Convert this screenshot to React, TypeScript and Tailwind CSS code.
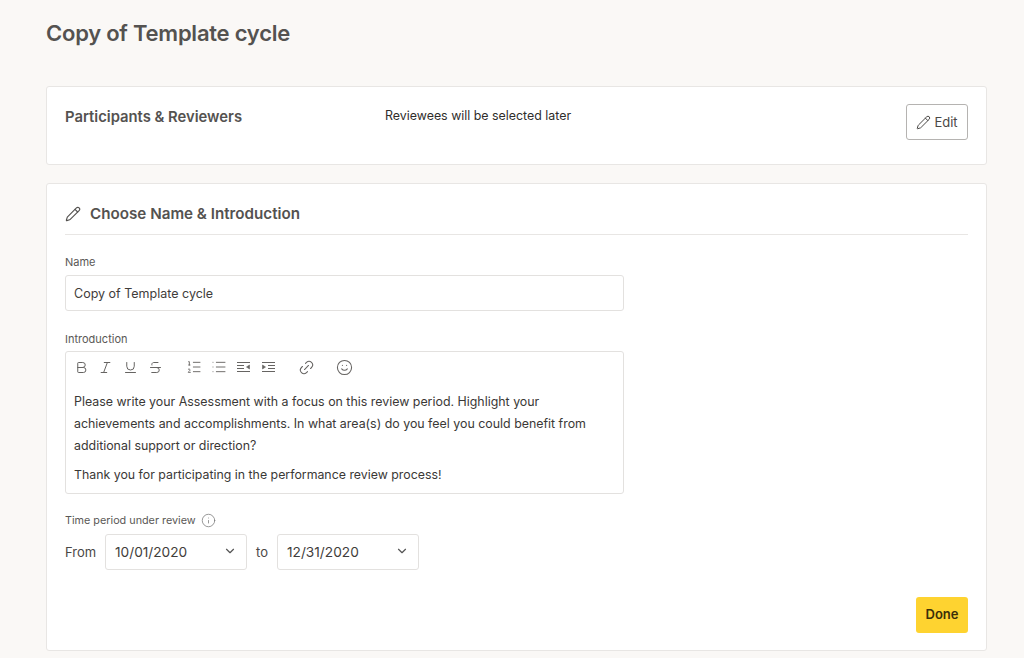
import { Bold, Italic, Underline, Strikethrough, ListOrdered, List, Link2, Smile, Pencil, ChevronDown, Info } from 'lucide-react';

const font = "font-['Inter','Liberation_Sans',sans-serif]";

function DateSelect({ value }: { value: string }) {
  return (
    <div className="flex h-[36px] w-[142px] items-center justify-between rounded-[3px] border border-[#e3e1df] bg-white pl-[9px] pr-[9px] text-[13.7px] text-[#3f3d3b]">
      <span>{value}</span>
      <ChevronDown className="-mt-[2px] h-[14px] w-[14px] text-[#555]" strokeWidth={2} />
    </div>
  );
}

// toolbar indent icon, four lines with a small arrow
function IndentIcon({ flip, className }: { flip?: boolean; className?: string }) {
  return (
    <svg viewBox="0 0 15 15" className={`h-[15px] w-[15px] ${flip ? '-scale-x-100' : ''} ${className ?? ''}`} fill="none" stroke="currentColor" strokeWidth="1.1">
      <path d="M1 2.5h13M7 5.5h7M7 8.5h7M1 11.5h13" />
      <path d="M1.5 5l3 2-3 2z" fill="currentColor" strokeWidth="0.6" />
    </svg>
  );
}

export default function App() {
  return (
    <div className={`${font} h-[658px] overflow-hidden bg-[#faf8f6] pl-[46px] pr-[37px] pt-[19px]`}>
      <h1 className="text-[22px] font-semibold leading-[28px] tracking-[-0.24px] text-[#545250]">Copy of Template cycle</h1>

      <section className="mt-[39px] flex h-[79px] items-start rounded-[3px] border border-[#e8e6e4] bg-white pl-[18px] pr-[18px]">
        <h2 className="mt-[20px] w-[320px] text-[14.8px] font-semibold leading-[20px] text-[#545250]">Participants &amp; Reviewers</h2>
        <p className="mt-[20px] flex-1 text-[12.4px] leading-[17px] text-[#2f2d2b]">Reviewees will be selected later</p>
        <button className="mt-[17px] flex h-[36px] w-[62px] items-center justify-center gap-[3px] rounded-[3px] border border-[#b5b3b1] pt-[1px] text-[13px] text-[#4a4846]">
          <Pencil className="h-[15px] w-[15px]" strokeWidth={1.6} />
          Edit
        </button>
      </section>

      <section className="mt-[18px] h-[468px] rounded-[3px] border border-[#e8e6e4] bg-white px-[18px]">
        <div className="flex h-[51px] items-center gap-[9px] border-b border-[#e8e6e4] pt-[10px]">
          <Pencil className="h-[16px] w-[16px] text-[#545250]" strokeWidth={1.7} />
          <h2 className="text-[15.2px] font-semibold text-[#545250]">Choose Name &amp; Introduction</h2>
        </div>

        <label className="mt-[20px] block text-[11px] leading-[14px] text-[#5a5856]">Name</label>
        <div className="mt-[6px] flex h-[36px] w-[559px] items-center rounded-[3px] border border-[#e3e1df] px-[8px] pt-[2px] text-[12.5px] text-[#3f3d3b]">Copy of Template cycle</div>

        <label className="mt-[21px] block text-[11px] leading-[14px] text-[#5a5856]">Introduction</label>
        <div className="mt-[5px] h-[143px] w-[559px] rounded-[3px] border border-[#e3e1df] px-[8px]">
          <div className="flex h-[30px] items-center text-[#666462]">
            <Bold className="h-[15px] w-[15px]" strokeWidth={1.6} />
            <Italic className="ml-[9px] h-[15px] w-[15px]" strokeWidth={1.6} />
            <Underline className="ml-[10px] h-[15px] w-[15px]" strokeWidth={1.6} />
            <Strikethrough className="ml-[10px] h-[15px] w-[15px]" strokeWidth={1.6} />
            <ListOrdered className="ml-[23px] h-[16px] w-[16px]" strokeWidth={1.4} />
            <List className="ml-[9px] h-[16px] w-[16px]" strokeWidth={1.4} />
            <IndentIcon flip className="ml-[9px]" />
            <IndentIcon className="ml-[10px]" />
            <Link2 className="ml-[22px] h-[17px] w-[17px] -rotate-45" strokeWidth={1.5} />
            <Smile className="ml-[21px] h-[17px] w-[17px]" strokeWidth={1.5} />
          </div>
          <p className="mt-[9px] text-[12.4px] leading-[22px] text-[#3a3836]">
            Please write your Assessment with a focus on this review period. Highlight your achievements and accomplishments. In what area(s) do you feel you could benefit from additional support or direction?
          </p>
          <p className="mt-[7px] text-[12.35px] leading-[22px] text-[#3a3836]">Thank you for participating in the performance review process!</p>
        </div>

        <div className="mt-[19px] flex items-center gap-[5px] text-[10.8px] leading-[14px] text-[#5a5856]">
          Time period under review
          <Info className="h-[15px] w-[15px] text-[#777]" strokeWidth={1.2} />
        </div>
        <div className="mt-[6px] flex items-center text-[13px] text-[#4a4846]">
          <span className="w-[40px] pt-[1px]">From</span>
          <DateSelect value="10/01/2020" />
          <span className="w-[30px] pt-[1px] text-center">to</span>
          <DateSelect value="12/31/2020" />
        </div>

        <div className="mt-[27px] flex justify-end">
          <button className="h-[36px] w-[52px] rounded-[3px] bg-[#fed330] text-[13px] font-semibold text-[#3b2f0a]">Done</button>
        </div>
      </section>
    </div>
  );
}
